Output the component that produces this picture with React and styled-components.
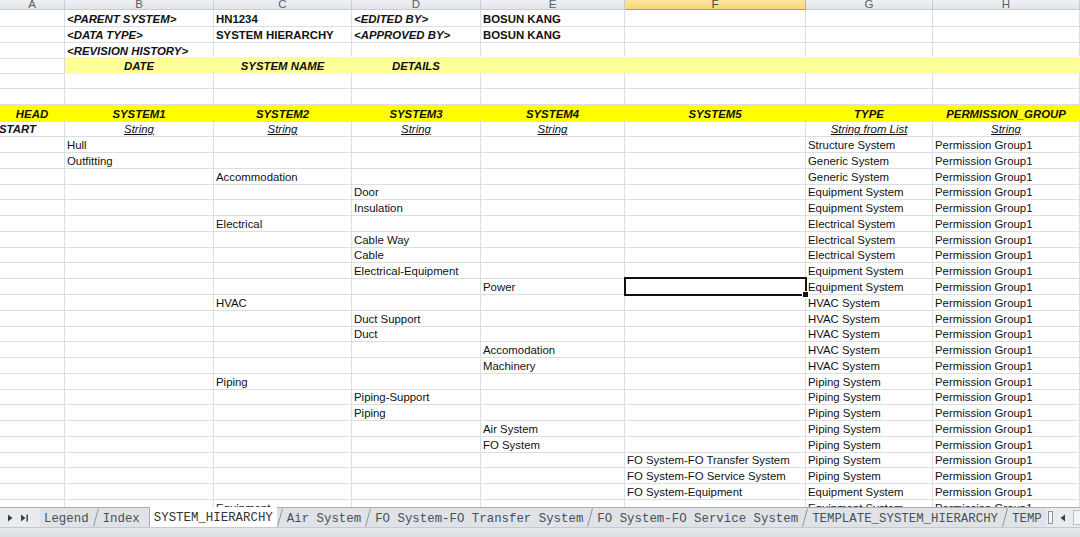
import React from 'react';
import styled, { createGlobalStyle, css } from 'styled-components';

const GlobalStyle = createGlobalStyle`
  html, body { margin: 0; padding: 0; background: #fff; }
  body { font-family: "Liberation Sans", Arial, sans-serif; }
`;

const COLS = '65px 149px 138px 129px 144px 181px 127px 1fr';
const LETTERS = ['A', 'B', 'C', 'D', 'E', 'F', 'G', 'H'];
const LIGHT_YELLOW = '#ffff99';
const YELLOW = '#ffff00';

const Sheet = styled.div`
  display: flex;
  flex-direction: column;
  width: 1080px;
  height: 537px;
  overflow: hidden;
`;

const Grid = styled.div`
  height: 507px;
  overflow: hidden;
`;

const HeaderRow = styled.div`
  display: grid;
  grid-template-columns: ${COLS};
  height: 10px;
`;

const ColHead = styled.div`
  box-sizing: border-box;
  border-right: 1px solid #c9ccd1;
  border-bottom: 1px solid #c9ccd1;
  background: linear-gradient(#eef0f3, #e2e5ea);
  color: #5b5f66;
  font-size: 11.5px;
  line-height: 8px;
  text-align: center;
  overflow: hidden;
  ${(p) => p.$active && css`
    background: linear-gradient(#fbe6a2, #f8d874);
    border-right-color: #d7ad51;
    border-bottom-color: #c99a3c;
    color: #4a4a4a;
  `}
`;

const Row = styled.div`
  display: grid;
  grid-template-columns: ${COLS};
  height: 15.78px;
`;

const Cell = styled.div`
  position: relative;
  box-sizing: border-box;
  border-right: 1px solid #dcdee1;
  border-bottom: 1px solid #dcdee1;
  padding: 2px 2px 0;
  font-size: 11.4px;
  line-height: 14px;
  color: #111;
  white-space: nowrap;
  text-align: ${(p) => p.$align || 'left'};
  font-weight: ${(p) => (p.$bold ? 700 : 400)};
  font-style: ${(p) => (p.$italic ? 'italic' : 'normal')};
  text-decoration: ${(p) => (p.$underline ? 'underline' : 'none')};
  ${(p) => p.$fill && css`
    background: ${p.$fill};
    border-color: ${p.$fill};
  `}
  ${(p) => p.$selected && css`
    outline: 2px solid #111;
    outline-offset: -1px;
    z-index: 2;
    &::after {
      content: '';
      position: absolute;
      right: -4px;
      bottom: -4px;
      width: 5px;
      height: 5px;
      background: #111;
      border: 1px solid #fff;
    }
  `}
`;

const TabBar = styled.div`
  display: flex;
  align-items: stretch;
  height: 20px;
  box-sizing: border-box;
  border-top: 1px solid #a7adb5;
  background: #e9ecef;
  font-family: "Liberation Mono", "Courier New", monospace;
  font-size: 12.4px;
  white-space: nowrap;
`;

const Nav = styled.div`
  display: flex;
  align-items: center;
  gap: 7px;
  width: 40px;
  padding-left: 7px;
  box-sizing: border-box;
  flex: none;
`;

const Tab = styled.div`
  display: flex;
  align-items: center;
  padding: 2px 4px 0;
  background: ${(p) => (p.$active ? '#fff' : '#dfe3e8')};
  color: ${(p) => (p.$active ? '#333' : '#4a4e55')};
  flex: none;
  ${(p) => p.$active && css`
    margin-top: -1px;
  `}
`;

const Slant = styled.svg`
  flex: none;
  width: 6px;
  height: 100%;
  background: #dfe3e8;
`;

const Splitter = styled.div`
  flex: none;
  width: 3px;
  margin: 3px 2px;
  border: 1px solid #8d939b;
  background: #f4f5f7;
`;

const ScrollLeft = styled.div`
  flex: none;
  width: 16px;
  display: flex;
  align-items: center;
  justify-content: center;
`;

const ScrollTrack = styled.div`
  flex: 1;
  margin: 2px 0 2px 2px;
  border: 1px solid #b9bec5;
  border-right: none;
  background: #f3f4f6;
`;

const StatusStrip = styled.div`
  flex: 1;
  border-top: 1px solid #c5c9cf;
  background: linear-gradient(#e6e8eb, #d9dce0);
`;

const Arrow = ({ bar }) => (
  <svg width={bar ? 9 : 6} height="8" viewBox={bar ? '0 0 9 8' : '0 0 6 8'}>
    <path d="M1 0.5 L5.5 4 L1 7.5 Z" fill="#3a3f46" />
    {bar && <rect x="6.5" y="0.5" width="1.4" height="7" fill="#3a3f46" />}
  </svg>
);

const SlantLine = ({ straight }) => (
  <Slant viewBox="0 0 6 19" preserveAspectRatio="none">
    {straight ? (
      <line x1="5.5" y1="0" x2="5.5" y2="19" stroke="#a7adb5" strokeWidth="1" />
    ) : (
      <line x1="0.5" y1="18.5" x2="5.5" y2="0.5" stroke="#8d939b" strokeWidth="1" />
    )}
  </Slant>
);

// [B, C, D, E, F, G]
const DATA = [
  ['Hull', '', '', '', '', 'Structure System'],
  ['Outfitting', '', '', '', '', 'Generic System'],
  ['', 'Accommodation', '', '', '', 'Generic System'],
  ['', '', 'Door', '', '', 'Equipment System'],
  ['', '', 'Insulation', '', '', 'Equipment System'],
  ['', 'Electrical', '', '', '', 'Electrical System'],
  ['', '', 'Cable Way', '', '', 'Electrical System'],
  ['', '', 'Cable', '', '', 'Electrical System'],
  ['', '', 'Electrical-Equipment', '', '', 'Equipment System'],
  ['', '', '', 'Power', '', 'Equipment System'],
  ['', 'HVAC', '', '', '', 'HVAC System'],
  ['', '', 'Duct Support', '', '', 'HVAC System'],
  ['', '', 'Duct', '', '', 'HVAC System'],
  ['', '', '', 'Accomodation', '', 'HVAC System'],
  ['', '', '', 'Machinery', '', 'HVAC System'],
  ['', 'Piping', '', '', '', 'Piping System'],
  ['', '', 'Piping-Support', '', '', 'Piping System'],
  ['', '', 'Piping', '', '', 'Piping System'],
  ['', '', '', 'Air System', '', 'Piping System'],
  ['', '', '', 'FO System', '', 'Piping System'],
  ['', '', '', '', 'FO System-FO Transfer System', 'Piping System'],
  ['', '', '', '', 'FO System-FO Service System', 'Piping System'],
  ['', '', '', '', 'FO System-Equipment', 'Equipment System'],
  ['', 'Equipment', '', '', '', 'Equipment System'],
];

const TABS = [
  'Legend',
  'Index',
  'SYSTEM_HIERARCHY',
  'Air System',
  'FO System-FO Transfer System',
  'FO System-FO Service System',
  'TEMPLATE_SYSTEM_HIERARCHY',
  'TEMP',
];
const ACTIVE_TAB = 2;

const Empty = ({ n, fill }) =>
  Array.from({ length: n }, (_, i) => <Cell key={`e${i}`} $fill={fill} />);

export default function App() {
  return (
    <Sheet>
      <GlobalStyle />
      <Grid>
        <HeaderRow>
          {LETTERS.map((l) => (
            <ColHead key={l} $active={l === 'F'}>{l}</ColHead>
          ))}
        </HeaderRow>

        <Row>
          <Cell />
          <Cell $bold $italic>&lt;PARENT SYSTEM&gt;</Cell>
          <Cell $bold>HN1234</Cell>
          <Cell $bold $italic>&lt;EDITED BY&gt;</Cell>
          <Cell $bold>BOSUN KANG</Cell>
          <Empty n={3} />
        </Row>
        <Row>
          <Cell />
          <Cell $bold $italic>&lt;DATA TYPE&gt;</Cell>
          <Cell $bold>SYSTEM HIERARCHY</Cell>
          <Cell $bold $italic>&lt;APPROVED BY&gt;</Cell>
          <Cell $bold>BOSUN KANG</Cell>
          <Empty n={3} />
        </Row>
        <Row>
          <Cell />
          <Cell $bold $italic>&lt;REVISION HISTORY&gt;</Cell>
          <Empty n={6} />
        </Row>
        <Row>
          <Cell />
          <Cell $bold $italic $align="center" $fill={LIGHT_YELLOW}>DATE</Cell>
          <Cell $bold $italic $align="center" $fill={LIGHT_YELLOW}>SYSTEM NAME</Cell>
          <Cell $bold $italic $align="center" $fill={LIGHT_YELLOW}>DETAILS</Cell>
          <Empty n={4} fill={LIGHT_YELLOW} />
        </Row>
        <Row><Empty n={8} /></Row>
        <Row><Empty n={8} /></Row>
        <Row>
          {['HEAD', 'SYSTEM1', 'SYSTEM2', 'SYSTEM3', 'SYSTEM4', 'SYSTEM5', 'TYPE', 'PERMISSION_GROUP'].map((t) => (
            <Cell key={t} $bold $italic $align="center" $fill={YELLOW}>{t}</Cell>
          ))}
        </Row>
        <Row>
          <Cell $bold $italic style={{ textIndent: '-3px' }}>START</Cell>
          {['String', 'String', 'String', 'String', '', 'String from List', 'String'].map((t, i) => (
            <Cell key={i} $italic $underline $align="center">{t}</Cell>
          ))}
        </Row>

        {DATA.map((r, i) => (
          <Row key={i}>
            <Cell />
            {r.map((t, j) => (
              <Cell key={j} $selected={i === 9 && j === 4}>{t}</Cell>
            ))}
            <Cell>Permission Group1</Cell>
          </Row>
        ))}
      </Grid>

      <TabBar>
        <Nav>
          <Arrow />
          <Arrow bar />
        </Nav>
        {TABS.map((t, i) => (
          <React.Fragment key={t}>
            {i > 0 && <SlantLine straight={i === ACTIVE_TAB} />}
            <Tab $active={i === ACTIVE_TAB}>{t}</Tab>
          </React.Fragment>
        ))}
        <Splitter />
        <ScrollLeft>
          <svg width="6" height="8" viewBox="0 0 6 8">
            <path d="M5 0.5 L0.5 4 L5 7.5 Z" fill="#3a3f46" />
          </svg>
        </ScrollLeft>
        <ScrollTrack />
      </TabBar>
      <StatusStrip />
    </Sheet>
  );
}
